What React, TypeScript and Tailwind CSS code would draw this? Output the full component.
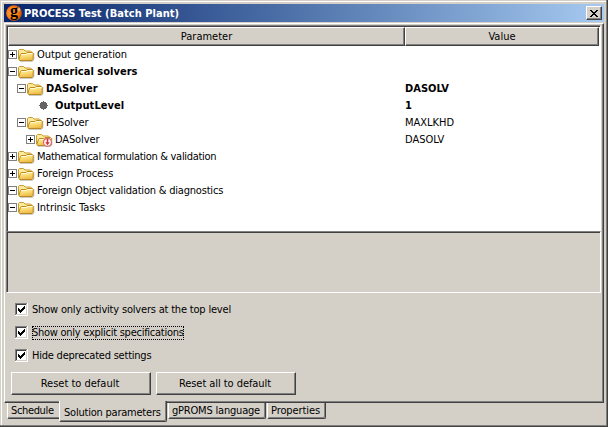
import type { ReactNode } from 'react';

function Folder({ error = false }: { error?: boolean }) {
  return (
    <svg width="17" height="14" viewBox="0 0 17 14" className="shrink-0">
      <defs>
        <linearGradient id="fold" x1="0" y1="0" x2="0.3" y2="1">
          <stop offset="0" stopColor="#fff2a4" />
          <stop offset="0.5" stopColor="#fbdf7c" />
          <stop offset="1" stopColor="#edbc48" />
        </linearGradient>
      </defs>
      <path d="M2 13.3H14.5L15.8 12V5" stroke="#8c887c" fill="none" opacity="0.55" />
      <path d="M0.5 11V2.5L1.5 1.5H5.5L7 3H12.5L13.5 4V6" fill="#fdeb9a" stroke="#c9992f" />
      <path d="M1.5 12.5L0.9 11.5L2.5 6.2L3.2 5.5H8L9 4.5H14.5L15.3 5.3L15 11.6L14.2 12.5Z" fill="url(#fold)" stroke="#bd8a22" />
      <path d="M3.6 6.5H8.4L9.4 5.5H14.3" stroke="#fffbd8" fill="none" />
      {error && (
        <g>
          <circle cx="11.5" cy="9.3" r="4" fill="#fff" stroke="#e0666e" strokeWidth="1.2" />
          <path d="M10.7 6H12.3V9.2H13.8L11.5 12.2L9.2 9.2H10.7Z" fill="#d8323c" />
        </g>
      )}
    </svg>
  );
}

function Expander({ open }: { open: boolean }) {
  return (
    <svg width="9" height="9" viewBox="0 0 9 9" shapeRendering="crispEdges" className="shrink-0">
      <path d="M0.5 0.5H8.5V8.5H0.5Z" fill="#fff" stroke="#808080" />
      <path d={open ? 'M2 4.5H7' : 'M2 4.5H7M4.5 2V7'} stroke="#000" />
    </svg>
  );
}

function Bullet() {
  return (
    <svg width="9" height="9" viewBox="0 0 9 9" shapeRendering="crispEdges" className="mr-[7px] ml-[13px]">
      <path d="M4 0h1v1h2v1h1v2h1v1h-1v2h-1v1h-2v1h-1v-1h-2v-1h-1v-2h-1v-1h1v-2h1v-1h2z" fill="#646464" />
    </svg>
  );
}

function AppLogo() {
  return (
    <span className="relative mr-[2px] ml-[2px] h-4 w-4 shrink-0">
      <svg width="16" height="16" viewBox="0 0 16 16">
        <defs>
          <radialGradient id="ball" cx="0.35" cy="0.5" r="0.65">
            <stop offset="0" stopColor="#ffa438" />
            <stop offset="0.6" stopColor="#fa7a10" />
            <stop offset="1" stopColor="#c84e08" />
          </radialGradient>
        </defs>
        <circle cx="8" cy="8" r="7.8" fill="url(#ball)" />
        <ellipse cx="12.8" cy="4.5" rx="1.5" ry="2" fill="#ffc48c" opacity="0.7" />
      </svg>
      <span className="absolute inset-x-0 -top-[3px] h-[18px] text-center font-['Liberation_Serif',serif] text-[16px] leading-[18px] font-bold text-black">
        g
      </span>
    </span>
  );
}

type Item = {
  label: string;
  indent: string;
  kind: 'open' | 'closed' | 'leaf';
  value?: string;
  bold?: boolean;
  error?: boolean;
  spacing?: string;
};

const items: Item[] = [
  { label: 'Output generation', indent: 'pl-0', kind: 'closed', spacing: 'tracking-[-0.08px]' },
  { label: 'Numerical solvers', indent: 'pl-0', kind: 'open', bold: true, spacing: 'tracking-[0.03px]' },
  { label: 'DASolver', indent: 'pl-[9px]', kind: 'open', bold: true, value: 'DASOLV', spacing: 'tracking-[0.06px]' },
  { label: 'OutputLevel', indent: 'pl-[18px]', kind: 'leaf', bold: true, value: '1', spacing: 'tracking-[0.06px]' },
  { label: 'PESolver', indent: 'pl-[9px]', kind: 'open', value: 'MAXLKHD', spacing: 'tracking-[-0.12px]' },
  { label: 'DASolver', indent: 'pl-[18px]', kind: 'closed', value: 'DASOLV', error: true, spacing: 'tracking-[-0.12px]' },
  { label: 'Mathematical formulation & validation', indent: 'pl-0', kind: 'closed', spacing: 'tracking-[-0.3px]' },
  { label: 'Foreign Process', indent: 'pl-0', kind: 'closed', spacing: 'tracking-[-0.06px]' },
  { label: 'Foreign Object validation & diagnostics', indent: 'pl-0', kind: 'open', spacing: 'tracking-[-0.2px]' },
  { label: 'Intrinsic Tasks', indent: 'pl-0', kind: 'open', spacing: 'tracking-[-0.06px]' },
];

function Row({ item }: { item: Item }) {
  return (
    <div className={`flex h-[17px] items-center ${item.bold ? 'font-bold' : ''}`}>
      <div className={`flex w-[397px] items-center ${item.indent}`}>
        {item.kind === 'leaf' ? (
          <Bullet />
        ) : (
          <>
            <Expander open={item.kind === 'open'} />
            <span className="mr-[2px] ml-px flex">
              <Folder error={item.error} />
            </span>
          </>
        )}
        <span className={item.spacing}>{item.label}</span>
      </div>
      <span>{item.value}</span>
    </div>
  );
}

function HeaderCell({ children, width }: { children: ReactNode; width: string }) {
  return (
    <div
      className={`flex items-center justify-center border border-t-white border-r-[#404040] border-b-[#404040] border-l-white bg-[#d4d0c8] shadow-[inset_-1px_-1px_#808080] ${width}`}
    >
      {children}
    </div>
  );
}

function Check({ children, focused = false, spacing }: { children: ReactNode; focused?: boolean; spacing: string }) {
  return (
    <div className="flex h-[23px] items-center">
      <svg width="13" height="13" viewBox="0 0 13 13" shapeRendering="crispEdges" className="mr-[4px]">
        <path d="M0 0H13V13H0Z" fill="#fff" />
        <path d="M1 11.5H11.5V1" fill="none" stroke="#d4d0c8" />
        <path d="M0.5 12V0.5H12" fill="none" stroke="#808080" />
        <path d="M1.5 11V1.5H11" fill="none" stroke="#404040" />
        <path d="M3 5h1v1h1v1h1v-1h1v-1h1v-1h1v-1h1v3h-1v1h-1v1h-1v1h-1v1h-1v-1h-1v-1h-1z" fill="#000" />
      </svg>
      <span
        className={`h-[14px] leading-[13px] ${spacing} ${focused ? 'outline-1 -outline-offset-1 outline-black outline-dotted' : ''}`}
      >
        {children}
      </span>
    </div>
  );
}

function Button({ children, spacing = '' }: { children: ReactNode; spacing?: string }) {
  return (
    <button
      className={`h-[23px] w-[140px] border border-t-white border-r-[#404040] border-b-[#404040] border-l-white pr-[2px] shadow-[inset_-1px_-1px_#808080] ${spacing}`}
    >
      {children}
    </button>
  );
}

export default function App() {
  return (
    <div className="h-[427px] w-[608px] overflow-hidden border-r border-b border-[#404040] bg-[#d4d0c8] font-['DejaVu_Sans_Condensed','DejaVu_Sans',sans-serif] text-[11px] leading-[13px] whitespace-nowrap text-black shadow-[inset_-1px_-1px_#808080,inset_1px_1px_#d4d0c8,inset_2px_2px_#fff]">
      <div className="w-[604px] pt-[4px] pl-[4px]">
        <header className="flex h-[18px] items-center bg-linear-to-r from-[#0a246a] to-[#a6caf0] text-white">
          <AppLogo />
          <b className="tracking-[0.04px]">PROCESS Test (Batch Plant)</b>
          <button className="mr-[2px] ml-auto flex h-[14px] w-[16px] items-center justify-center border border-t-white border-r-[#404040] border-b-[#404040] border-l-white bg-[#d4d0c8] shadow-[inset_-1px_-1px_#808080]">
            <svg width="8" height="7" viewBox="0 0 8 7" shapeRendering="crispEdges">
              <path
                d="M0 0h2v1h1v1h2v-1h1v-1h2v1h-1v1h-1v1h-1v1h1v1h1v1h1v1h-2v-1h-1v-1h-2v1h-1v1h-2v-1h1v-1h1v-1h1v-1h-1v-1h-1v-1h-1z"
                fill="#000"
              />
            </svg>
          </button>
        </header>
        <main className="mt-px h-[380px] w-[600px] border border-t-white border-r-[#404040] border-b-[#404040] border-l-white p-px shadow-[inset_-1px_-1px_#808080]">
          <section className="h-[206px] w-[595px] border-t border-r border-l border-t-[#808080] border-r-white border-l-[#808080]">
            <div className="h-full border-t border-l border-[#404040] bg-white">
              <div className="flex h-[19px]">
                <HeaderCell width="w-[397px]">Parameter</HeaderCell>
                <HeaderCell width="w-[194px]">Value</HeaderCell>
              </div>
              {items.map((item, i) => (
                <Row key={i} item={item} />
              ))}
            </div>
          </section>
          <section className="h-[62px] w-[595px] border border-t-[#808080] border-r-white border-b-white border-l-[#808080]">
            <div className="h-full border-t border-l border-[#404040]" />
          </section>
          <div className="pt-[5px] pl-[9px]">
            <Check spacing="tracking-[-0.19px]">Show only activity solvers at the top level</Check>
            <Check spacing="tracking-[-0.26px]" focused>
              Show only explicit specifications
            </Check>
            <Check spacing="tracking-[-0.22px]">Hide deprecated settings</Check>
          </div>
          <div className="flex gap-[5px] pt-[5px] pl-[5px]">
            <Button>Reset to default</Button>
            <Button spacing="tracking-[-0.06px]">Reset all to default</Button>
          </div>
        </main>
        <footer className="flex items-start pl-[3px]">
          <span className="h-[16px] w-[52px] rounded-bl-[2px] border-b border-l border-b-[#404040] border-l-white pt-px pl-[3px] tracking-[-0.35px] shadow-[inset_0_-1px_#808080]">
            Schedule
          </span>
          <span className="z-10 -mt-[2px] mr-px h-[21px] w-[108px] rounded-b-[2px] border-r border-b border-l border-r-[#404040] border-b-[#404040] border-l-white bg-[#d4d0c8] pt-[5px] pl-[4px] tracking-[-0.22px] shadow-[inset_-1px_-1px_#808080]">
            Solution parameters
          </span>
          <span className="mr-px h-[16px] w-[98px] rounded-b-[2px] border-r border-b border-l border-r-[#404040] border-b-[#404040] border-l-white pt-px pl-[3px] tracking-[-0.2px] shadow-[inset_-1px_-1px_#808080]">
            gPROMS language
          </span>
          <span className="h-[16px] w-[59px] rounded-b-[2px] border-r border-b border-l border-r-[#404040] border-b-[#404040] border-l-white pt-px pl-[3px] tracking-[-0.1px] shadow-[inset_-1px_-1px_#808080]">
            Properties
          </span>
        </footer>
      </div>
    </div>
  );
}
